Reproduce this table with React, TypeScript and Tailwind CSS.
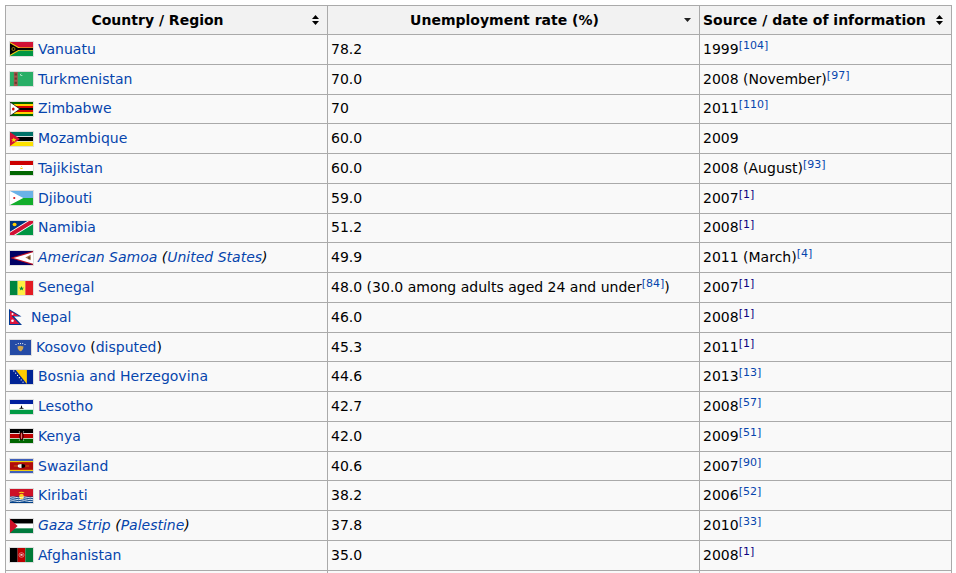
import type { ReactNode } from 'react';

const LINK = 'text-[#0645ad]';

function Box({ children }: { children: ReactNode }) {
  return <span className="inline-flex border border-[#ddd] mr-[4px] shrink-0">{children}</span>;
}

function Svg({ vb, w = 23, h = 14, children }: { vb: string; w?: number; h?: number; children: ReactNode }) {
  return (
    <svg width={w} height={h} viewBox={vb} preserveAspectRatio="none" className="block">
      {children}
    </svg>
  );
}

const flags: Record<string, () => ReactNode> = {
  vanuatu: () => (
    <Box>
      <Svg vb="0 0 60 36">
        <rect width="60" height="18" fill="#d21034" />
        <rect y="18" width="60" height="18" fill="#009543" />
        <rect y="14" width="60" height="8" fill="#fdce12" />
        <polygon points="0,0 31,18 0,36" fill="#fdce12" />
        <rect y="15.5" width="60" height="5" fill="#000" />
        <polygon points="0,3 26,18 0,33" fill="#000" />
        <circle cx="9" cy="18" r="4" fill="none" stroke="#fdce12" strokeWidth="1.5" />
      </Svg>
    </Box>
  ),
  turkmenistan: () => (
    <Box>
      <Svg vb="0 0 30 20">
        <rect width="30" height="20" fill="#28ae66" />
        <rect x="5" width="5" height="20" fill="#a8554d" />
        <rect x="6" y="2" width="3" height="3" fill="#6b3a2e" />
        <rect x="6" y="8" width="3" height="3" fill="#6b3a2e" />
        <rect x="6" y="14" width="3" height="3" fill="#6b3a2e" />
        <circle cx="15" cy="4" r="1.6" fill="#fff" />
        <circle cx="15.7" cy="3.6" r="1.4" fill="#28ae66" />
      </Svg>
    </Box>
  ),
  zimbabwe: () => (
    <Box>
      <Svg vb="0 0 28 14">
        {['#006400', '#ffd200', '#d40000', '#000', '#d40000', '#ffd200', '#006400'].map((c, i) => (
          <rect key={i} y={i * 2} width="28" height="2" fill={c} />
        ))}
        <polygon points="0,0 12,7 0,14" fill="#fff" stroke="#000" strokeWidth="0.8" />
        <circle cx="4" cy="7" r="1.6" fill="#d40000" />
      </Svg>
    </Box>
  ),
  mozambique: () => (
    <Box>
      <Svg vb="0 0 30 20">
        <rect width="30" height="6" fill="#007168" />
        <rect y="6" width="30" height="8" fill="#fff" />
        <rect y="7" width="30" height="6" fill="#000" />
        <rect y="14" width="30" height="6" fill="#fce100" />
        <polygon points="0,0 13,10 0,20" fill="#d21034" />
        <polygon points="5,8 6,10.5 8.5,10.5 6.5,12 7.3,14.5 5,13 2.7,14.5 3.5,12 1.5,10.5 4,10.5" fill="#fce100" />
      </Svg>
    </Box>
  ),
  tajikistan: () => (
    <Box>
      <Svg vb="0 0 28 14">
        <rect width="28" height="4" fill="#cc0000" />
        <rect y="4" width="28" height="6" fill="#fff" />
        <rect y="10" width="28" height="4" fill="#006600" />
        <path d="M12.5 8 L13 6.5 L14 7.2 L15 6.5 L15.5 8 Z" fill="#f8c300" />
        <circle cx="14" cy="5.5" r="0.5" fill="#f8c300" />
      </Svg>
    </Box>
  ),
  djibouti: () => (
    <Box>
      <Svg vb="0 0 27 18">
        <rect width="27" height="9" fill="#6ab2e7" />
        <rect y="9" width="27" height="9" fill="#12ad2b" />
        <polygon points="0,0 15.6,9 0,18" fill="#fff" />
        <circle cx="5" cy="9" r="1.3" fill="#d7141a" />
      </Svg>
    </Box>
  ),
  namibia: () => (
    <Box>
      <Svg vb="0 0 30 20">
        <polygon points="0,0 30,0 0,20" fill="#003580" />
        <polygon points="30,0 30,20 0,20" fill="#009543" />
        <line x1="-2" y1="21.5" x2="32" y2="-1.5" stroke="#fff" strokeWidth="8" />
        <line x1="-2" y1="21.5" x2="32" y2="-1.5" stroke="#d21034" strokeWidth="5.5" />
        <circle cx="6" cy="5" r="2.6" fill="#ffce00" />
      </Svg>
    </Box>
  ),
  samoa: () => (
    <Box>
      <Svg vb="0 0 30 15">
        <rect width="30" height="15" fill="#000063" />
        <polygon points="30,0 0,7.5 30,15" fill="#bd1021" />
        <polygon points="30,1.4 4.6,7.5 30,13.6" fill="#fff" />
        <path d="M20 7 L27 4 L27 10 Z" fill="#a57d4d" />
        <circle cx="25" cy="7.5" r="1.5" fill="#6b4a2a" />
      </Svg>
    </Box>
  ),
  senegal: () => (
    <Box>
      <Svg vb="0 0 30 20">
        <rect width="10" height="20" fill="#00853f" />
        <rect x="10" width="10" height="20" fill="#fdef42" />
        <rect x="20" width="10" height="20" fill="#e31b23" />
        <polygon points="15,7 15.9,9.5 18.5,9.5 16.4,11 17.2,13.5 15,12 12.8,13.5 13.6,11 11.5,9.5 14.1,9.5" fill="#00853f" />
      </Svg>
    </Box>
  ),
  nepal: () => (
    <span className="inline-flex mr-[9px] shrink-0">
      <Svg vb="0 0 13 16" w={13} h={16}>
        <polygon points="0,0 12.5,7.6 5,7.6 13,16 0,16" fill="#003893" />
        <polygon points="1,1.8 10,7 3,7 3,7.6 10.5,15 1,15" fill="#dc143c" />
        <circle cx="3.5" cy="5" r="1" fill="#fff" />
        <circle cx="3.5" cy="11.8" r="1.3" fill="#fff" />
      </Svg>
    </span>
  ),
  kosovo: () => (
    <Box>
      <Svg vb="0 0 21 15" w={21} h={15}>
        <rect width="21" height="15" fill="#244aa5" />
        <path d="M7.5 6.5 L10 5.8 L13.5 6.6 L13 9 L11 11.5 L9 10.5 L7.8 8.5 Z" fill="#d0a650" />
        {[6, 8.3, 10.5, 12.7, 15].map((x, i) => (
          <circle key={i} cx={x} cy={i === 0 || i === 4 ? 4.5 : 3.6} r="0.55" fill="#fff" />
        ))}
      </Svg>
    </Box>
  ),
  bosnia: () => (
    <Box>
      <Svg vb="0 0 30 15">
        <rect width="30" height="15" fill="#002395" />
        <polygon points="7.5,0 22,0 22,15" fill="#fecb00" />
        {[0, 1, 2, 3, 4, 5].map(i => (
          <circle key={i} cx={5 + i * 2.4} cy={1 + i * 2.4} r="0.75" fill="#fff" />
        ))}
      </Svg>
    </Box>
  ),
  lesotho: () => (
    <Box>
      <Svg vb="0 0 30 20">
        <rect width="30" height="6" fill="#00209f" />
        <rect y="6" width="30" height="8" fill="#fff" />
        <rect y="14" width="30" height="6" fill="#009a44" />
        <path d="M11.5 12.5 L18.5 12.5 L16 11 L15.3 8 L14.7 8 L14 11 Z" fill="#000" />
      </Svg>
    </Box>
  ),
  kenya: () => (
    <Box>
      <Svg vb="0 0 30 20">
        <rect width="30" height="6" fill="#000" />
        <rect y="6" width="30" height="8" fill="#fff" />
        <rect y="7" width="30" height="6" fill="#bb0000" />
        <rect y="14" width="30" height="6" fill="#006600" />
        <line x1="12" y1="3" x2="18" y2="17" stroke="#fff" strokeWidth="0.7" />
        <line x1="18" y1="3" x2="12" y2="17" stroke="#fff" strokeWidth="0.7" />
        <ellipse cx="15" cy="10" rx="2.6" ry="6" fill="#000" />
        <ellipse cx="15" cy="10" rx="1.6" ry="5" fill="#bb0000" />
        <rect x="14.7" y="6" width="0.6" height="8" fill="#fff" />
      </Svg>
    </Box>
  ),
  swaziland: () => (
    <Box>
      <Svg vb="0 0 30 20">
        <rect width="30" height="20" fill="#3e5eb9" />
        <rect y="3" width="30" height="14" fill="#ffd900" />
        <rect y="4.5" width="30" height="11" fill="#b10c0c" />
        <line x1="5" y1="10" x2="25" y2="10" stroke="#ffd900" strokeWidth="0.6" />
        <ellipse cx="15" cy="10" rx="5" ry="2.8" fill="#000" />
        <path d="M15 7.2 A5 2.8 0 0 0 15 12.8 Z" fill="#fff" />
        <circle cx="13" cy="10" r="0.5" fill="#000" />
      </Svg>
    </Box>
  ),
  kiribati: () => (
    <Box>
      <Svg vb="0 0 30 15">
        <rect width="30" height="15" fill="#003f87" />
        <rect width="30" height="8" fill="#ce1126" />
        <circle cx="15" cy="8" r="3" fill="#fcd116" />
        <path d="M11 4 Q15 2 19 4 L17 4.5 Q15 3.5 13 4.5 Z" fill="#fcd116" />
        {[9, 11, 13].map(y => (
          <path key={y} d={`M0 ${y} Q3.75 ${y - 1} 7.5 ${y} T15 ${y} T22.5 ${y} T30 ${y}`} stroke="#fff" strokeWidth="1" fill="none" />
        ))}
      </Svg>
    </Box>
  ),
  palestine: () => (
    <Box>
      <Svg vb="0 0 30 15">
        <rect width="30" height="5" fill="#000" />
        <rect y="5" width="30" height="5" fill="#fff" />
        <rect y="10" width="30" height="5" fill="#007a3d" />
        <polygon points="0,0 10,7.5 0,15" fill="#ce1126" />
      </Svg>
    </Box>
  ),
  afghanistan: () => (
    <Box>
      <Svg vb="0 0 30 20">
        <rect width="10" height="20" fill="#000" />
        <rect x="10" width="10" height="20" fill="#be0000" />
        <rect x="20" width="10" height="20" fill="#007a36" />
        <circle cx="15" cy="10" r="3.3" fill="none" stroke="#fff" strokeWidth="0.6" />
        <rect x="13.6" y="8.5" width="2.8" height="2.6" fill="#fff" opacity="0.8" />
      </Svg>
    </Box>
  ),
};

function Ref({ n, visited }: { n: string; visited?: boolean }) {
  return (
    <sup className={`relative top-[-0.45em] align-baseline text-[11px] leading-none ${visited ? 'text-[#0b0080]' : LINK}`}>
      [{n}]
    </sup>
  );
}

type Row = { flag?: string; name?: ReactNode; rate: ReactNode; date: string; ref?: string; visited?: boolean };

const rows: Row[] = [
  { flag: 'vanuatu', name: <a className={LINK}>Vanuatu</a>, rate: '78.2', date: '1999', ref: '104' },
  { flag: 'turkmenistan', name: <a className={LINK}>Turkmenistan</a>, rate: '70.0', date: '2008 (November)', ref: '97' },
  { flag: 'zimbabwe', name: <a className={LINK}>Zimbabwe</a>, rate: '70', date: '2011', ref: '110' },
  { flag: 'mozambique', name: <a className={LINK}>Mozambique</a>, rate: '60.0', date: '2009' },
  { flag: 'tajikistan', name: <a className={LINK}>Tajikistan</a>, rate: '60.0', date: '2008 (August)', ref: '93' },
  { flag: 'djibouti', name: <a className={LINK}>Djibouti</a>, rate: '59.0', date: '2007', ref: '1', visited: true },
  { flag: 'namibia', name: <a className={LINK}>Namibia</a>, rate: '51.2', date: '2008', ref: '1', visited: true },
  {
    flag: 'samoa',
    name: (
      <i>
        <a className={LINK}>American Samoa</a> (<a className={LINK}>United States</a>)
      </i>
    ),
    rate: '49.9',
    date: '2011 (March)',
    ref: '4',
  },
  {
    flag: 'senegal',
    name: <a className={LINK}>Senegal</a>,
    rate: (
      <>
        48.0 (30.0 among adults aged 24 and under<Ref n="84" />)
      </>
    ),
    date: '2007',
    ref: '1',
    visited: true,
  },
  { flag: 'nepal', name: <a className={LINK}>Nepal</a>, rate: '46.0', date: '2008', ref: '1', visited: true },
  {
    flag: 'kosovo',
    name: (
      <>
        <a className={LINK}>Kosovo</a> (<a className={LINK}>disputed</a>)
      </>
    ),
    rate: '45.3',
    date: '2011',
    ref: '1',
    visited: true,
  },
  { flag: 'bosnia', name: <a className={LINK}>Bosnia and Herzegovina</a>, rate: '44.6', date: '2013', ref: '13' },
  { flag: 'lesotho', name: <a className={LINK}>Lesotho</a>, rate: '42.7', date: '2008', ref: '57' },
  { flag: 'kenya', name: <a className={LINK}>Kenya</a>, rate: '42.0', date: '2009', ref: '51' },
  { flag: 'swaziland', name: <a className={LINK}>Swaziland</a>, rate: '40.6', date: '2007', ref: '90' },
  { flag: 'kiribati', name: <a className={LINK}>Kiribati</a>, rate: '38.2', date: '2006', ref: '52' },
  {
    flag: 'palestine',
    name: (
      <i>
        <a className={LINK}>Gaza Strip</a> (<a className={LINK}>Palestine</a>)
      </i>
    ),
    rate: '37.8',
    date: '2010',
    ref: '33',
  },
  { flag: 'afghanistan', name: <a className={LINK}>Afghanistan</a>, rate: '35.0', date: '2008', ref: '1', visited: true },
  { rate: '', date: '' },
];

function SortBoth() {
  return (
    <svg width="7" height="10" viewBox="0 0 7 10" className="absolute right-[8px] top-1/2 -translate-y-1/2">
      <polygon points="0,4 3.5,0 7,4" fill="#000" />
      <polygon points="0,6 3.5,10 7,6" fill="#000" />
    </svg>
  );
}

function SortDown() {
  return (
    <svg width="7" height="4" viewBox="0 0 7 4" className="absolute right-[8px] top-1/2 -translate-y-1/2">
      <polygon points="0,0 7,0 3.5,4" fill="#222" />
    </svg>
  );
}

export default function App() {
  const th = 'relative h-[29px] border border-[#aaa] bg-[#f2f2f2] py-0 pl-[3px] pr-[21px] font-bold';
  const td = 'h-[29.78px] border border-[#aaa] px-[3px] py-0';
  return (
    <div className="min-h-[573px] bg-white font-['DejaVu_Sans',sans-serif] text-[14px] text-black">
      <table className="ml-[5px] mt-[5px] w-[946px] table-fixed border-collapse bg-[#f9f9f9] leading-[21px]">
        <colgroup>
          <col className="w-[322px]" />
          <col className="w-[372px]" />
          <col className="w-[252px]" />
        </colgroup>
        <thead>
          <tr>
            <th className={`${th} text-center`}>
              Country / Region
              <SortBoth />
            </th>
            <th className={`${th} text-center`}>
              Unemployment rate (%)
              <SortDown />
            </th>
            <th className={`${th} text-left whitespace-nowrap`}>
              Source / date of information
              <SortBoth />
            </th>
          </tr>
        </thead>
        <tbody>
          {rows.map((r, i) => (
            <tr key={i}>
              <td className={td}>
                {r.flag && (
                  <span className="flex items-center">
                    {flags[r.flag]()}
                    <span>{r.name}</span>
                  </span>
                )}
              </td>
              <td className={td}>{r.rate}</td>
              <td className={td}>
                {r.date}
                {r.ref && <Ref n={r.ref} visited={r.visited} />}
              </td>
            </tr>
          ))}
        </tbody>
      </table>
    </div>
  );
}
